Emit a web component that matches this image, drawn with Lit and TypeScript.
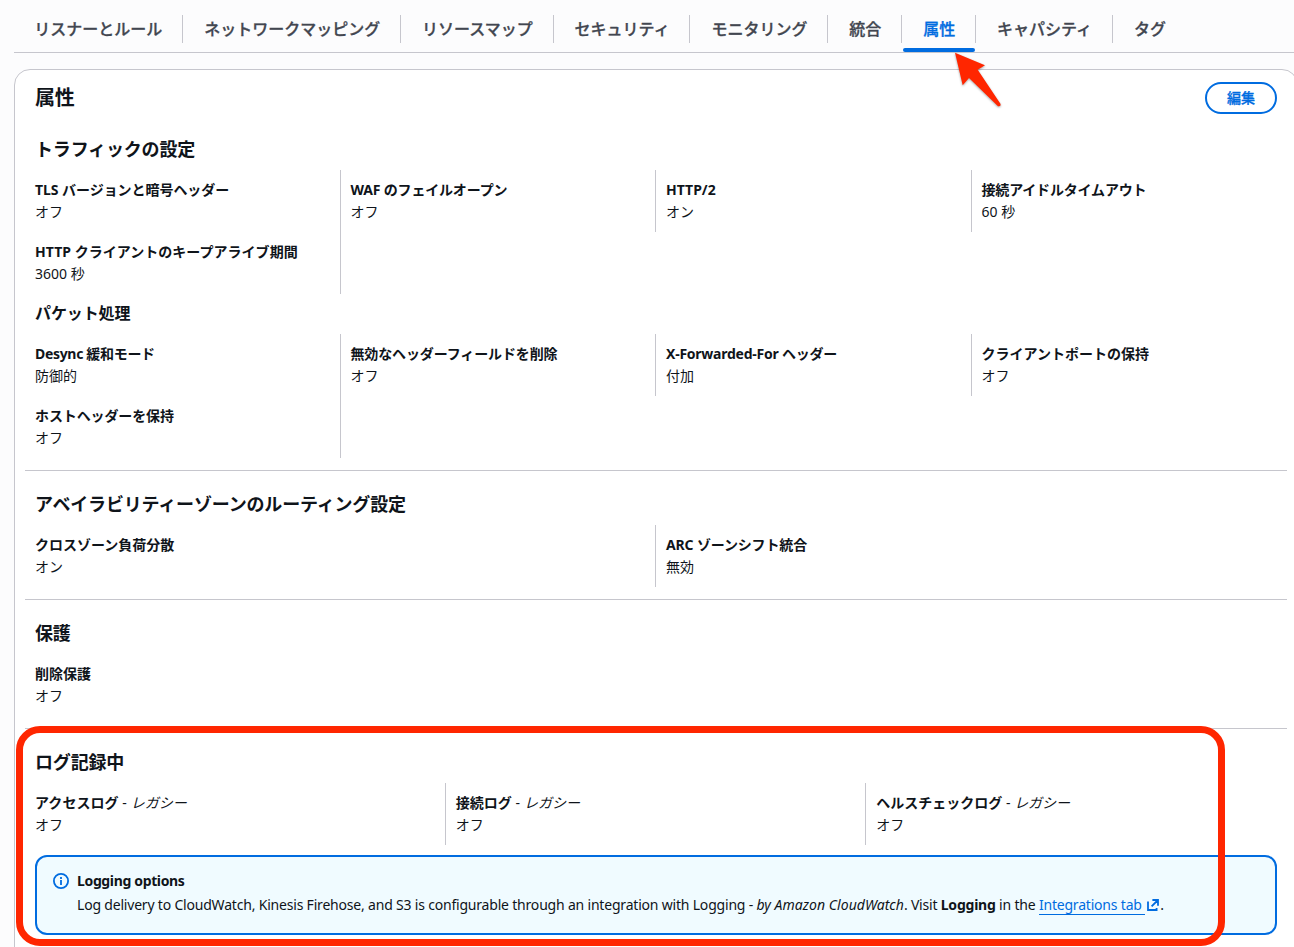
import { LitElement, html, css, svg } from "lit";
import { customElement, property } from "lit/decorators.js";
import { classMap } from "lit/directives/class-map.js";
import { styleMap } from "lit/directives/style-map.js";

interface Field {
  label: string;
  value: string;
  legacy?: boolean;
  /** Letter spacing of the label, in px. */
  tracking?: number;
}

const TABS = ["リスナーとルール", "ネットワークマッピング", "リソースマップ", "セキュリティ", "モニタリング", "統合", "属性", "キャパシティ", "タグ"];

const TRAFFIC: Field[] = [
  { label: "TLS バージョンと暗号ヘッダー", value: "オフ", tracking: -0.05 },
  { label: "WAF のフェイルオープン", value: "オフ", tracking: -0.18 },
  { label: "HTTP/2", value: "オン" },
  { label: "接続アイドルタイムアウト", value: "60 秒", tracking: -0.18 },
  { label: "HTTP クライアントのキープアライブ期間", value: "3600 秒", tracking: 0.03 },
];

const PACKET: Field[] = [
  { label: "Desync 緩和モード", value: "防御的", tracking: -0.32 },
  { label: "無効なヘッダーフィールドを削除", value: "オフ", tracking: -0.13 },
  { label: "X-Forwarded-For ヘッダー", value: "付加", tracking: -0.24 },
  { label: "クライアントポートの保持", value: "オフ" },
  { label: "ホストヘッダーを保持", value: "オフ", tracking: -0.12 },
];

const ZONES: Field[] = [
  { label: "クロスゾーン負荷分散", value: "オン" },
  { label: "ARC ゾーンシフト統合", value: "無効", tracking: -0.15 },
];

const PROTECTION: Field[] = [{ label: "削除保護", value: "オフ" }];

const LOGS: Field[] = [
  { label: "アクセスログ", value: "オフ", legacy: true, tracking: 0.06 },
  { label: "接続ログ", value: "オフ", legacy: true, tracking: 0.06 },
  { label: "ヘルスチェックログ", value: "オフ", legacy: true },
];

@customElement("tab-bar")
export class TabBar extends LitElement {
  static styles = css`
    :host { display: block; }
    .bar { display: flex; height: 52px; border-bottom: 1px solid #c6c6cd; }
    .tab {
      position: relative;
      display: flex;
      flex: none;
      height: 52px;
      padding: 0 20.85px 0 21px;
      color: #424650;
      font-size: 16px;
      font-weight: 500;
      -webkit-text-stroke: 0.3px currentColor;
      line-height: 57px;
      white-space: nowrap;
    }
    .tab:first-child { padding-left: 20.3px; }
    .tab:not(:last-child)::after {
      content: "";
      position: absolute;
      right: 0;
      top: 15px;
      width: 1px;
      height: 28px;
      background: #c6c6cd;
    }
    .active { color: #006ce0; }
    .active::before {
      content: "";
      position: absolute;
      left: 1px;
      right: 1px;
      bottom: 0;
      height: 4px;
      border-radius: 2px;
      background: #006ce0;
    }
  `;

  @property() current = "";

  render() {
    return html`<div class="bar">
      ${TABS.map((t) => html`<div class=${classMap({ tab: true, active: t === this.current })}>${t}</div>`)}
    </div>`;
  }
}

@customElement("field-grid")
export class FieldGrid extends LitElement {
  static styles = css`
    :host { display: block; }
    .grid { display: grid; }
    .c1 { grid-template-columns: 1fr; }
    .c2 { grid-template-columns: repeat(2, 1fr); }
    .c3 { grid-template-columns: repeat(3, 1fr); }
    .c4 { grid-template-columns: repeat(4, 1fr); }
    .cell {
      box-sizing: border-box;
      height: 62px;
      padding: 9px 10px 0;
      border-right: 1px solid #c6c6cd;
      font-size: 14px;
      line-height: 22px;
      white-space: nowrap;
    }
    .last { border-right-color: transparent; }
    .label { font-weight: 700; }
    .plain { font-weight: 400; }
  `;

  @property({ attribute: false }) fields: Field[] = [];
  @property({ type: Number }) columns = 4;

  render() {
    return html`<div class="grid c${this.columns}">
      ${this.fields.map(
        (f, i) => html`<div class=${classMap({ cell: true, last: i % this.columns === this.columns - 1 })}>
          <div class="label" style=${styleMap({ letterSpacing: `${f.tracking ?? 0}px` })}>${f.label}${f.legacy ? html`<span class="plain"> - <i>レガシー</i></span>` : ""}</div>
          <div>${f.value}</div>
        </div>`,
      )}
    </div>`;
  }
}

const infoIcon = svg`<circle cx="8" cy="8" r="7.1" /><path d="M8 12V7M8 6V4" />`;
const externalIcon = svg`<path d="M6.4 2H12V7.8M5.6 8.4 12 2M2 3.6V12H10.6V10" />`;

@customElement("app-root")
export class AppRoot extends LitElement {
  static styles = css`
    :host {
      display: block;
      position: relative;
      height: 947px;
      overflow: hidden;
      background: #fcfcfd;
      color: #0f141a;
      font-family: "Noto Sans", "Noto Sans CJK JP", sans-serif;
      font-size: 14px;
    }
    .tabs { margin-left: 14px; font-family: "Noto Sans CJK JP", sans-serif; }
    .card {
      box-sizing: border-box;
      width: 1284px;
      height: 920px;
      margin: 16px 0 0 14px;
      padding: 12px 10px 0;
      border: 1px solid #c6c6cd;
      border-radius: 16px;
      background: #fff;
    }
    .head {
      display: flex;
      justify-content: space-between;
      height: 32px;
      padding: 0 10px;
    }
    .title { margin: 0; font-size: 20px; line-height: 31px; font-weight: 700; letter-spacing: -0.2px; }
    .edit {
      box-sizing: border-box;
      width: 72px;
      height: 32px;
      padding: 0 0 2px;
      border: 2px solid #006ce0;
      border-radius: 16px;
      background: #fff;
      color: #006ce0;
      font: 500 14px/26px "Noto Sans CJK JP", sans-serif;
      -webkit-text-stroke: 0.3px currentColor;
    }
    .h2 { margin: 0; padding: 0 10px; font-size: 18px; line-height: 24px; height: 22px; font-weight: 700; letter-spacing: -0.18px; }
    .first { padding-top: 23px; }
    .h3 { margin: 0; padding: 9px 10px 10px; font-size: 16px; line-height: 21px; font-weight: 700; letter-spacing: -0.1px; }
    .fields { margin-top: 11px; }
    .after { margin-top: 0; }
    .section { margin-top: 12px; padding-top: 21px; border-top: 1px solid #c6c6cd; }
    .alert {
      box-sizing: border-box;
      display: flex;
      gap: 8px;
      height: 80px;
      margin: 10px 10px 0;
      padding: 13px 16px;
      border: 2px solid #006ce0;
      border-radius: 12px;
      background: #f0fbff;
      line-height: 22px;
      letter-spacing: -0.195px;
      white-space: nowrap;
    }
    .alert b { letter-spacing: -0.35px; }
    .alert i { letter-spacing: 0.04px; }
    .icon { fill: none; stroke: #006ce0; stroke-width: 1.8; }
    .info { flex: none; width: 16px; height: 16px; margin-top: 3px; }
    .ext { width: 14px; height: 14px; margin-left: 1px; vertical-align: -2px; }
    .msg { padding-top: 2px; }
    .msg b { letter-spacing: -0.22px; }
    .link { color: #006ce0; border-bottom: 1px solid #006ce0; text-decoration: none; white-space: pre; }
    .frame {
      position: absolute;
      box-sizing: border-box;
      left: 16px;
      top: 726px;
      width: 1209px;
      height: 220px;
      border: 7px solid #ff2600;
      border-radius: 24px;
    }
    .arrow {
      position: absolute;
      left: 950px;
      top: 48px;
      width: 60px;
      height: 64px;
      fill: #ff2600;
      filter: drop-shadow(0 1px 1px rgba(0, 0, 0, 0.35));
    }
  `;

  render() {
    return html`
      <tab-bar class="tabs" lang="ja" current="属性"></tab-bar>
      <div class="card" lang="ja">
        <div class="head">
          <h1 class="title">属性</h1>
          <button class="edit">編集</button>
        </div>
        <h2 class="h2 first">トラフィックの設定</h2>
        <field-grid class="fields" .fields=${TRAFFIC}></field-grid>
        <h3 class="h3">パケット処理</h3>
        <field-grid class="after" .fields=${PACKET}></field-grid>
        <div class="section">
          <h2 class="h2">アベイラビリティーゾーンのルーティング設定</h2>
          <field-grid class="fields" columns="2" .fields=${ZONES}></field-grid>
        </div>
        <div class="section">
          <h2 class="h2">保護</h2>
          <field-grid class="fields" columns="1" .fields=${PROTECTION}></field-grid>
        </div>
        <div class="section">
          <h2 class="h2">ログ記録中</h2>
          <field-grid class="fields" columns="3" .fields=${LOGS}></field-grid>
        </div>
        <div class="alert">
          <svg class="icon info" viewBox="0 0 16 16">${infoIcon}</svg>
          <div>
            <b>Logging options</b>
            <div class="msg">Log delivery to CloudWatch, Kinesis Firehose, and S3 is configurable through an integration with Logging - <i>by Amazon CloudWatch</i>. Visit <b>Logging</b> in the <a class="link">Integrations tab </a><svg class="icon ext" viewBox="0 0 14 14">${externalIcon}</svg>.</div>
          </div>
        </div>
      </div>
      <div class="frame"></div>
      <svg class="arrow" viewBox="950 48 60 64">
        <path d="M955 52.7 985 65.3 977.7 69.7 1000.6 104Q1001 107 998 106.2L969 78 962.7 85.3Z" />
      </svg>
    `;
  }
}
